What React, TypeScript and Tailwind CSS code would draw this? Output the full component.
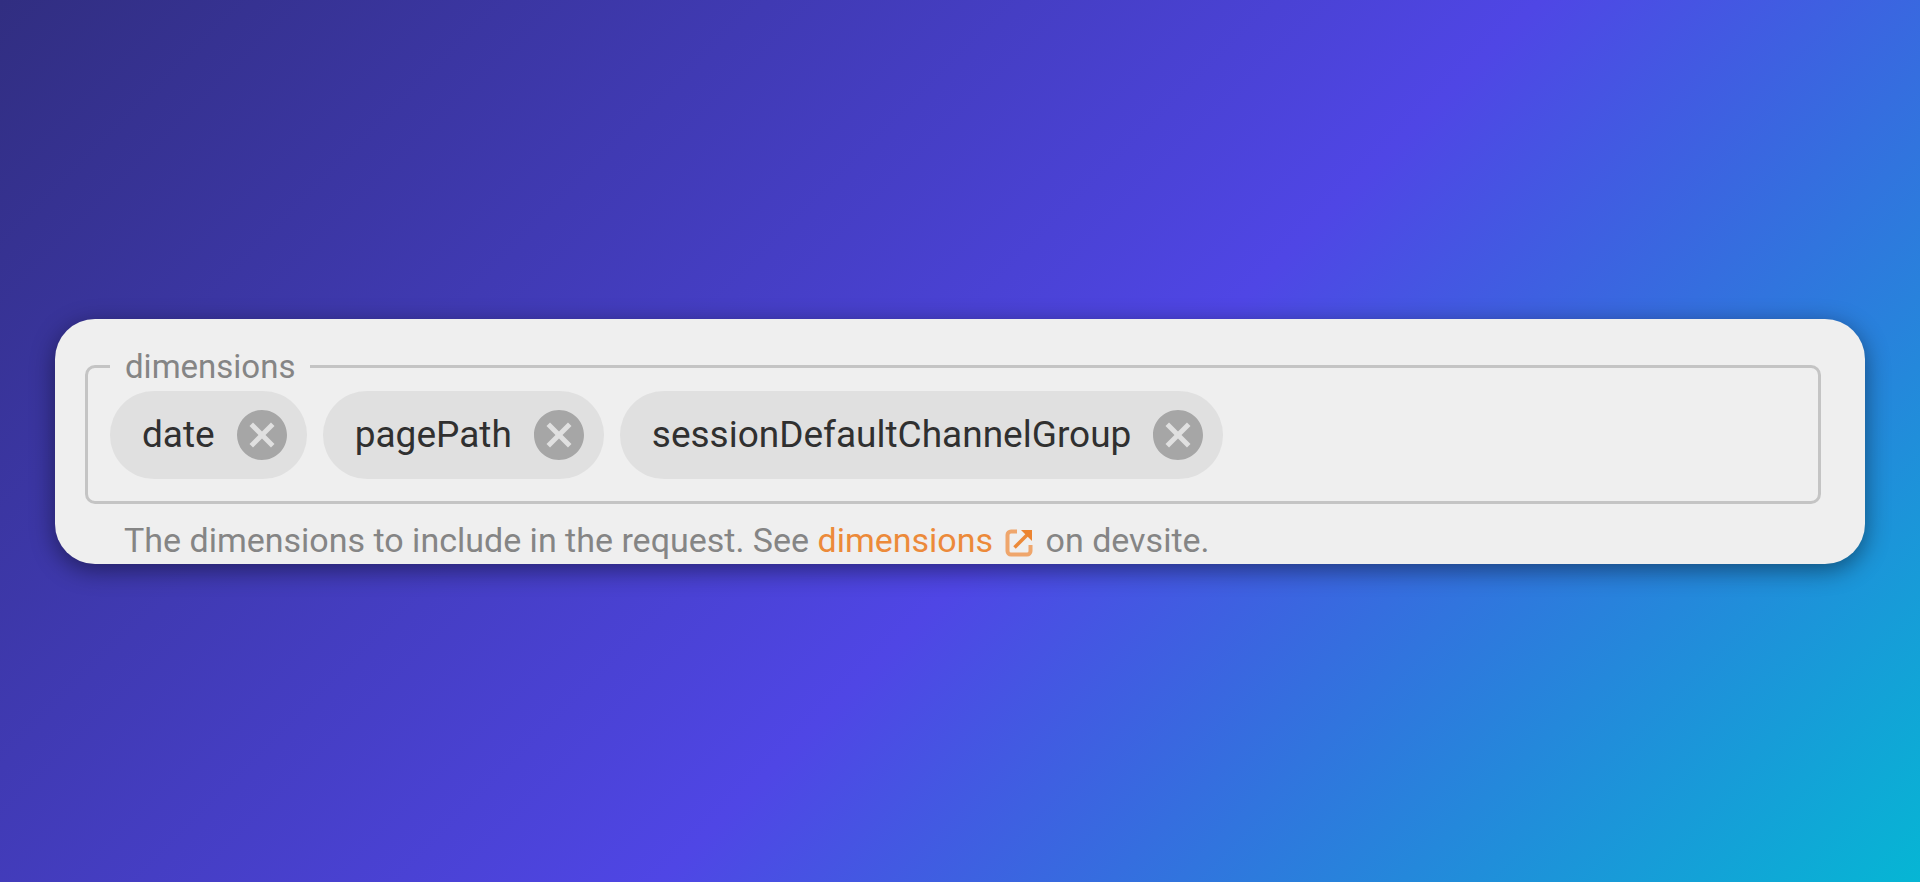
import React from "react";

const initialDimensions = ["date", "pagePath", "sessionDefaultChannelGroup"];

function CancelIcon() {
  return (
    <svg viewBox="2 2 20 20" className="size-[50px]" fill="currentColor" aria-hidden="true">
      <path d="M12 2C6.47 2 2 6.47 2 12s4.47 10 10 10 10-4.47 10-10S17.53 2 12 2zm5 13.59L15.59 17 12 13.41 8.41 17 7 15.59 10.59 12 7 8.41 8.41 7 12 10.59 15.59 7 17 8.41 13.41 12 17 15.59z" />
    </svg>
  );
}

function ExternalIcon() {
  return (
    <svg
      viewBox="0 0 28 28"
      className="mr-1 ml-3 inline-block size-7 align-[-5px]"
      fill="none"
      aria-hidden="true"
    >
      <path
        d="M12 2.5H6A3.5 3.5 0 0 0 2.5 6v16A3.5 3.5 0 0 0 6 25.5h16a3.5 3.5 0 0 0 3.5-3.5v-6"
        stroke="#efa66c"
        strokeWidth="4"
      />
      <path d="M9.5 18.5L22 6" stroke="#ec8a3a" strokeWidth="3.5" />
      <path d="M16 1h11v11z" fill="#ec8430" />
    </svg>
  );
}

type ChipProps = {
  label: string;
  onDelete: () => void;
};

function Chip({ label, onDelete }: ChipProps) {
  return (
    <li className="flex h-[88px] items-center gap-[22px] rounded-full bg-[#e0e0e0] pr-5 pl-8">
      <span className="text-[37px] leading-[40px] text-[#303030]">{label}</span>
      <button
        type="button"
        aria-label={`Remove ${label}`}
        className="cursor-pointer rounded-full text-[#a6a6a6] hover:text-[#8c8c8c]"
        onClick={onDelete}
      >
        <CancelIcon />
      </button>
    </li>
  );
}

export default function App() {
  const [dimensions, setDimensions] = React.useState<string[]>(initialDimensions);

  const removeHandler = (name: string) => {
    setDimensions((prev) => prev.filter((item) => item !== name));
  };

  return (
    <main className="flex min-h-screen items-center bg-[linear-gradient(135deg,#312e81_0%,#4f46e5_55%,#06b6d4_100%)] px-[55px] font-['Roboto',sans-serif]">
      <section className="w-full rounded-[40px] bg-[#efefef] pt-7 pr-11 pb-1 pl-[30px] shadow-[0_6px_24px_rgba(0,0,0,0.45)]">
        <fieldset className="min-h-[138px] rounded-[10px] border-3 border-[#c4c4c4] px-[22px] pt-1 pb-[22px]">
          <legend className="px-[15px] text-[33px] leading-[40px] text-[#858585]">dimensions</legend>
          <ul className="flex flex-wrap gap-4">
            {dimensions.map((name) => (
              <Chip key={name} label={name} onDelete={() => removeHandler(name)} />
            ))}
          </ul>
        </fieldset>
        <p className="mt-4 pl-[39px] text-[34px] leading-[40px] text-[#858585]">
          The dimensions to include in the request. See{" "}
          <a href="#dimensions" className="text-[#ec8a3a]">
            dimensions
            <ExternalIcon />
          </a>{" "}
          on devsite.
        </p>
      </section>
    </main>
  );
}
